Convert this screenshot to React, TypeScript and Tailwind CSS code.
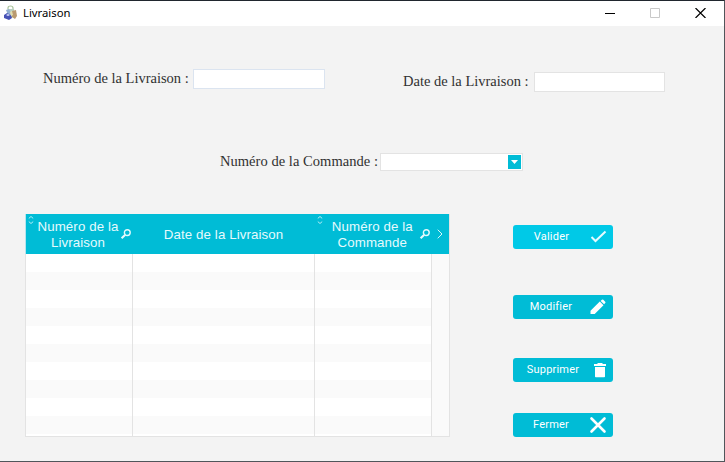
import type { ReactNode } from "react";

const serif = "font-['Liberation_Serif',serif] text-[#303030] whitespace-nowrap";

function Magnifier() {
  return (
    <svg width="12" height="12" viewBox="0 0 12 12" fill="none" stroke="#e6fafd">
      <circle cx="7.3" cy="4.6" r="2.9" strokeWidth="1.4" />
      <path d="M5 7 1.6 10.2" strokeWidth="2.1" />
    </svg>
  );
}

function SortMark() {
  return (
    <svg width="6" height="8" viewBox="0 0 6 8" fill="none" stroke="#c8f2f8" strokeWidth="0.9">
      <path d="M.8 2.4 3 .5 5.2 2.4M.8 5.6 3 7.5 5.2 5.6" />
    </svg>
  );
}

function ActionButton({ label, tone, width, children }: { label: string; tone: string; width: string; children: ReactNode }) {
  return (
    <button className={`flex h-6 w-[100px] items-center rounded-[3px] ${tone}`}>
      <span className={`${width} text-center font-['Roboto',sans-serif] text-[11px] leading-[14px] tracking-[0.2px] text-white`}>{label}</span>
      <span className="ml-auto mr-1.5">{children}</span>
    </button>
  );
}

function Header() {
  const text = "text-center font-['Liberation_Sans',sans-serif] text-[13.3px] leading-4 tracking-[0.1px] text-[#e6fafd] whitespace-nowrap";
  return (
    <div className="-ml-px flex h-10 w-[424px] shrink-0 border-l border-[#b5e5ee] bg-[#00bcd6]">
      <div className="flex w-[107px] pl-[2px]">
        <div className="pt-0.5"><SortMark /></div>
        <div className={`w-[86px] pl-[2px] pt-[5px] ${text}`}>Numéro de la<br />Livraison</div>
        <div className="pt-3.5"><Magnifier /></div>
      </div>
      <div className={`w-[182px] pt-[13px] ${text}`}>Date de la Livraison</div>
      <div className="flex w-[135px] pl-[3px]">
        <div className="pt-0.5"><SortMark /></div>
        <div className={`w-[96px] pl-[2px] pt-[5px] ${text}`}>Numéro de la<br />Commande</div>
        <div className="pt-3.5"><Magnifier /></div>
        <svg className="ml-[6px] mt-[15px]" width="6" height="10" viewBox="0 0 6 10" fill="none" stroke="#d5f6fa">
          <path d="m.7.7 4.3 4.3-4.3 4.3" />
        </svg>
      </div>
    </div>
  );
}

export default function App() {
  return (
    <div className="flex h-[462px] w-[725px] flex-col overflow-hidden border-r border-b border-t border-r-[#50555a] border-b-[#50555a] border-t-[#20262e] bg-[#f3f3f3]">
      <header className="flex h-[25px] shrink-0 items-center bg-white pb-px pl-[3px]">
        <svg width="14" height="16" viewBox="0 0 14 16">
          <path d="M5 4.5V3a2.5 2 0 0 1 5 0v2" fill="none" stroke="#a8c49b" strokeWidth="1.2" />
          <path d="M5 4h6l1 8-5 1-3-2z" fill="#b9cfc0" />
          <path d="m9 6 4-1 1 6-2 3-3-2z" fill="#b99a70" />
          <path d="m3 5 3-1 2 4-3 2z" fill="#91afd0" />
          <path d="m1 10 3-2 4 2 1 3-3 2-5-2z" fill="#4652b5" />
          <path d="m3 10 2-1 2 1-2 1z" fill="#d8e1ff" />
          <path d="m7 7 2-1 1 4-2 1z" fill="#e1ddaf" />
        </svg>
        <h1 className="ml-1.5 font-['Noto_Sans',sans-serif] text-[11.3px] leading-4 text-black">Livraison</h1>
        <div className="ml-auto mr-[18px] flex items-center gap-[35px]">
          <svg width="10" height="10" viewBox="0 0 10 10"><path d="M0 5.5h10" stroke="#000" /></svg>
          <svg width="10" height="10" viewBox="0 0 10 10"><path d="M.5.5h9v9h-9z" fill="none" stroke="#c9c9c9" /></svg>
          <svg width="11" height="10" viewBox="0 0 11 10"><path d="m.5 0 10 10m0-10-10 10" stroke="#000" strokeWidth="1.2" /></svg>
        </div>
      </header>

      <div className="flex h-[127px] shrink-0 pt-[43px]">
        <label className={`ml-[43px] flex h-5 items-center text-[14.5px] ${serif}`}>
          <span className="w-[150px]">Numéro de la Livraison :</span>
          <input className="h-5 w-[132px] border border-[#dbe4f0] bg-white outline-none" />
        </label>
        <label className={`ml-[78px] mt-[3px] flex h-5 items-center text-[14.5px] ${serif}`}>
          <span className="w-[131px]">Date de la Livraison :</span>
          <input className="h-5 w-[131px] border border-[#e3e3e3] bg-white outline-none" />
        </label>
      </div>

      <div className={`ml-[220px] flex h-[18px] shrink-0 items-center text-[14.5px] ${serif}`}>
        <span className="w-[160px] tracking-[0.04px]">Numéro de la Commande :</span>
        <div className="flex h-[18px] w-[143px] items-center justify-end border border-[#e3e3e3] bg-white pr-px">
          <button className="flex h-3.5 w-[13px] items-center justify-center bg-[#00bcd6]">
            <svg width="7" height="4" viewBox="0 0 7 4"><path d="M0 0h7L3.5 4z" fill="#fff" /></svg>
          </button>
        </div>
      </div>

      <main className="flex pt-[43px]">
        <section className="ml-[25px] flex h-[223px] w-[425px] shrink-0 flex-col border-b border-l border-r border-[#e3e3e3] bg-white">
          <Header />
          <div className="flex flex-1">
            {["w-[107px]", "w-[182px]", "w-[117px]"].map((width) => (
              <div key={width} className={`${width} border-r border-[#e3e3e3]`}>
                {Array.from({ length: 10 }, (_, i) => (
                  <div key={i} className={i % 2 ? "h-[18px] bg-[#fafafa]" : "h-[18px] bg-white"} />
                ))}
              </div>
            ))}
            <div className="flex-1 bg-[#fafafa]" />
          </div>
        </section>

        <aside className="ml-[63px] flex flex-col pt-[11px]">
          <ActionButton label="Valider" tone="bg-[#00c9e7]" width="w-[77px]">
            <svg width="17" height="14" viewBox="0 0 17 14"><path d="m1.5 7 4 4L15.5 1.5" fill="none" stroke="#e6fbff" strokeWidth="2" /></svg>
          </ActionButton>
          <div className="h-[46px]" />
          <ActionButton label="Modifier" tone="bg-[#00bcd6]" width="w-[77px]">
            <svg width="18" height="18" viewBox="0 0 18 18" fill="#fff"><path d="M1.5 12.8 10.8 3.5l3.7 3.7-8.8 8.8H1.5zM11.6 2.9l1.3-1.1a1 1 0 0 1 1.4 0l1.9 1.9a1 1 0 0 1 0 1.4L15.1 6.3z" /></svg>
          </ActionButton>
          <div className="h-[39px]" />
          <ActionButton label="Supprimer" tone="bg-[#00bcd6]" width="w-[80px]">
            <svg width="14" height="16" viewBox="0 0 14 16" fill="#fff"><path d="M1 2h3l1-1h4l1 1h3v2H1zM2 5h10v9.5a.8.8 0 0 1-.8.8H2.8a.8.8 0 0 1-.8-.8z" /></svg>
          </ActionButton>
          <div className="h-[31px]" />
          <ActionButton label="Fermer" tone="bg-[#00bcd6]" width="w-[77px]">
            <svg width="18" height="18" viewBox="0 0 18 18"><path d="m2.5 2.5 13 13m0-13-13 13" stroke="#fff" strokeWidth="2.6" strokeLinecap="round" /></svg>
          </ActionButton>
        </aside>
      </main>
    </div>
  );
}
